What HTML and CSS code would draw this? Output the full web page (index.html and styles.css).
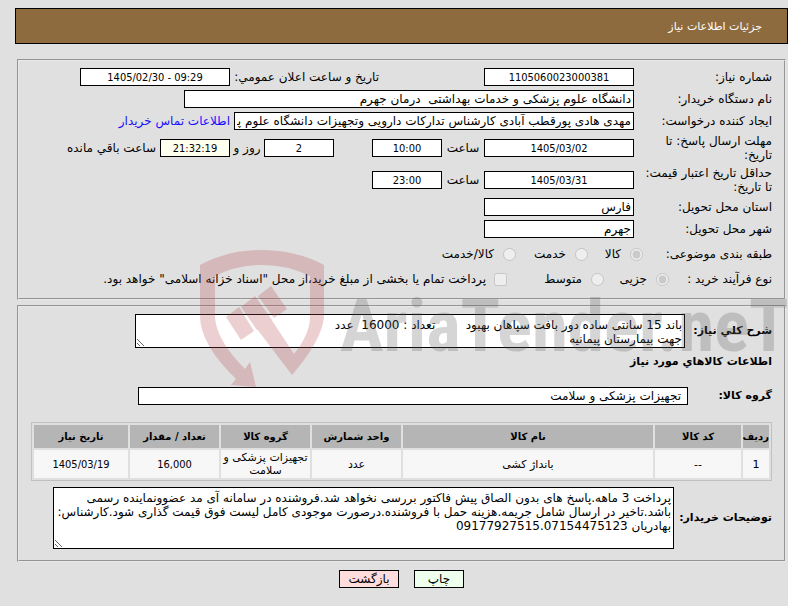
FILE: index.html
```
<!DOCTYPE html>
<html lang="fa" dir="rtl">
<head>
    <meta charset="UTF-8">
    <meta name="viewport" content="width=device-width, initial-scale=1.0">
    <title>جزئیات اطلاعات نیاز</title>
    <link rel="stylesheet" href="styles.css">
</head>
<body>
    <h1 class="header">جزئیات اطلاعات نیاز</h1>
    <form class="wrapper">
        <fieldset class="box">
            <div class="row">
                <label class="name" for="number">شماره نیاز:</label>
                <input class="field date" id="number" type="text" value="1105060023000381" readonly>
                <label class="announce" for="announce">تاریخ و ساعت اعلان عمومي:</label>
                <input class="field date" id="announce" type="text" dir="ltr" value="1405/02/30 - 09:29" readonly>
            </div>
            <div class="row">
                <label class="name" for="org">نام دستگاه خریدار:</label>
                <input class="field org" id="org" type="text" value="دانشگاه علوم پزشکی و خدمات بهداشتی  درمان جهرم" readonly>
            </div>
            <div class="row">
                <label class="name" for="creator">ایجاد کننده درخواست:</label>
                <input class="field creator" id="creator" type="text" value="مهدی هادی پورقطب آبادی کارشناس تدارکات دارویی وتجهیزات دانشگاه علوم پزشکی جهرم" readonly>
                <a class="contact" href="#">اطلاعات تماس خریدار</a>
            </div>
            <div class="row tall">
                <label class="name" for="deadline">مهلت ارسال پاسخ: تا<br>تاریخ:</label>
                <input class="field date" id="deadline" type="text" value="1405/03/02" readonly>
                <label class="unit" for="deadlineTime">ساعت</label>
                <input class="field time" id="deadlineTime" type="text" value="10:00" readonly>
                <input class="field time days" id="days" type="text" value="2" readonly>
                <label class="and" for="days">روز و</label>
                <input class="field time left" id="left" type="text" value="21:32:19" readonly>
                <label class="remain" for="left">ساعت باقي مانده</label>
            </div>
            <div class="row tall">
                <label class="name" for="valid">حداقل تاریخ اعتبار قیمت:<br>تا تاریخ:</label>
                <input class="field date" id="valid" type="text" value="1405/03/31" readonly>
                <label class="unit" for="validTime">ساعت</label>
                <input class="field time" id="validTime" type="text" value="23:00" readonly>
            </div>
            <div class="row">
                <label class="name" for="province">استان محل تحویل:</label>
                <input class="field place" id="province" type="text" value="فارس" readonly>
            </div>
            <div class="row">
                <label class="name" for="city">شهر محل تحویل:</label>
                <input class="field place" id="city" type="text" value="جهرم" readonly>
            </div>
            <div class="row options subject">
                <span class="name">طبقه بندی موضوعی:</span>
                <label class="option"><input type="radio" name="subject" checked disabled>کالا</label>
                <label class="option second"><input type="radio" name="subject" disabled>خدمت</label>
                <label class="option last"><input type="radio" name="subject" disabled>کالا/خدمت</label>
            </div>
            <div class="row options process">
                <span class="name">نوع فرآیند خرید :</span>
                <label class="option"><input type="radio" name="process" checked disabled>جزیی</label>
                <label class="option second"><input type="radio" name="process" disabled>متوسط</label>
                <label class="option last"><input type="checkbox" disabled>پرداخت تمام یا بخشی از مبلغ خرید،از محل "اسناد خزانه اسلامی" خواهد بود.</label>
            </div>
        </fieldset>

        <fieldset class="box goods">
            <div class="row desc">
                <label class="bold" for="desc">شرح كلي نیاز:</label>
                <textarea class="area" id="desc" readonly>باند 15 سانتی ساده دور بافت سپاهان بهبود        تعداد : 16000  عدد
جهت بیمارستان پیمانیه</textarea>
            </div>
            <h2 class="title">اطلاعات كالاهاي مورد نیاز</h2>
            <div class="row group">
                <label class="bold" for="group">گروه کالا:</label>
                <input class="field" id="group" type="text" value="تجهیزات پزشکی و سلامت" readonly>
            </div>
            <table class="items">
                <thead>
                    <tr>
                        <th class="num">ردیف</th>
                        <th class="code">کد کالا</th>
                        <th>نام کالا</th>
                        <th class="mid">واحد شمارش</th>
                        <th class="mid">گروه کالا</th>
                        <th class="mid">تعداد / مقدار</th>
                        <th class="when">تاریخ نیاز</th>
                    </tr>
                </thead>
                <tbody>
                    <tr>
                        <td>1</td>
                        <td>--</td>
                        <td>بانداژ کشی</td>
                        <td>عدد</td>
                        <td>تجهیزات پزشکی و سلامت</td>
                        <td class="digits">16,000</td>
                        <td class="digits">1405/03/19</td>
                    </tr>
                </tbody>
            </table>
            <div class="row notes">
                <label class="bold" for="notes">توضیحات خریدار:</label>
                <textarea class="area" id="notes" readonly>پرداخت 3 ماهه.پاسخ های بدون الصاق پیش فاکتور بررسی نخواهد شد.فروشنده در سامانه آی مد عضوونماینده رسمی
باشد.تاخیر در ارسال شامل جریمه.هزینه حمل با فروشنده.درصورت موجودی کامل لیست فوق قیمت گذاری شود.کارشناس:
بهادریان 09177927515.07154475123</textarea>
            </div>
        </fieldset>

        <div class="buttons">
            <button class="btn print" type="button">چاپ</button>
            <button class="btn back" type="button">بازگشت</button>
        </div>
    </form>

    <div class="watermark" dir="ltr" aria-hidden="true">
        <svg class="shield" width="126" height="138" viewBox="0 0 126 138">
            <path d="M0 15 Q28 0 62 0 T124 15 V67 Q122 90 92 125 L57 79 L71 69 L94 104 Q110 84 110 67 V26 Q88 15 62 15 T15 26 V68 Q17 91 45 119 L50 112 L56 137 L31 135 L36 129 Q0 94 0 66 Z"/>
            <path d="M71 36 L87 59 L74 68 L58 46 Z"/>
            <path d="M55 46 L72 70 L57 80 L41 57 Z"/>
            <path d="M39 57 L54 81 L41 90 L26 67 Z"/>
        </svg>
        <span class="brand">AriaTender.neT</span>
    </div>
</body>
</html>
```
FILE: styles.css
```
*{
    box-sizing: border-box;
}
body{
    margin: 8px 0 0 15px;
    background: #e0e0e0;
    color: black;
    font-family: "DejaVu Sans", sans-serif;
    font-size: 12px;
    line-height: 14px;
}
.header{
    height: 36px;
    margin: 0 0 15px;
    padding: 2px 25px 0;
    display: flex;
    align-items: center;
    border: 1px solid black;
    background: #8e6b3e;
    color: white;
    font-size: 11px;
    font-weight: normal;
}
.wrapper{
    margin: 0 2px;
}
.box{
    min-width: 0;
    margin: 0 0 5px;
    padding: 5px 12px 8px;
    border: 2px groove #e8e8e8;
}
.row{
    min-height: 22px;
    display: flex;
    align-items: center;
    white-space: nowrap;
}
.tall{
    min-height: 32px;
}
.name{
    width: 138px;
    flex: none;
}
.field, .area{
    border: 1px solid black;
    border-radius: 0;
    background: white;
    color: black;
    font: inherit;
    outline: none;
}
.field{
    height: 18px;
    padding: 0 2px;
}
.date, .time, .digits{
    font-family: "DejaVu Sans Condensed", "DejaVu Sans", sans-serif;
    font-size: 11px;
    text-align: center;
}
.date{
    width: 150px;
}
.place{
    width: 150px;
}
.org{
    width: 450px;
}
.creator{
    width: 400px;
}
.time{
    width: 70px;
}
.announce{
    width: 149px;
    margin-right: 105px;
}
.contact{
    margin-right: 4px;
    color: #1a0dff;
    text-decoration: none;
}
.unit{
    width: 42px;
    text-align: center;
}
.days{
    margin-right: 38px;
}
.and{
    width: 34px;
    text-align: center;
}
.left{
    background: #fffff0;
}
.remain{
    margin-right: 4px;
}
.subject{
    min-height: 28px;
}
.subject .name{
    width: 129px;
}
.process .name{
    width: 103px;
}
.option{
    width: 55px;
    display: flex;
    align-items: center;
    gap: 9px;
}
.option input{
    width: 13px;
    height: 13px;
    margin: 0;
    flex: none;
}
.subject .second{
    width: 72px;
}
.process .option{
    width: 65px;
}
.process .second{
    width: 97px;
}
.options .last{
    width: auto;
}
.process .last{
    gap: 8px;
}
.bold{
    font-size: 11px;
    font-weight: bold;
}
.area{
    margin: 0;
    padding: 3px 2px;
    overflow: hidden;
    resize: both;
}
.goods{
    padding-top: 7px;
    padding-bottom: 11px;
}
.desc .bold{
    width: 87px;
}
.desc .area{
    width: 550px;
    height: 34px;
}
.title{
    margin: 7px 0 16px;
    font-size: 11px;
}
.group .bold{
    width: 84px;
}
.group .field{
    width: 550px;
    padding: 0 6px;
}
.items{
    width: 100%;
    margin: 15px 0 6px;
    table-layout: fixed;
    border: 1px solid #c0c0c0;
    border-spacing: 2px;
    font-size: 11px;
    line-height: 13px;
    text-align: center;
}
.items th, .items td{
    padding: 0;
}
.items th{
    height: 23px;
    background: #b5b5b5;
    font-size: 10px;
}
.items td{
    height: 28px;
    background: #f7f7f7;
}
.num{
    width: 26px;
}
.code{
    width: 86px;
}
.mid{
    width: 89px;
}
.when{
    width: 94px;
}
.notes .bold{
    width: 98px;
}
.notes .area{
    width: 621px;
    height: 62px;
}
.buttons{
    margin-top: 8px;
    display: flex;
    justify-content: center;
    gap: 15px;
}
.btn{
    height: 18px;
    padding: 0;
    border: 1px solid black;
    color: black;
    font: inherit;
    cursor: pointer;
}
.print{
    width: 50px;
    background: #eeffee;
}
.back{
    width: 60px;
    background: #ffdddd;
}
.watermark{
    position: absolute;
    top: 250px;
    left: 200px;
    display: flex;
    align-items: flex-start;
    gap: 14px;
    opacity: 0.25;
    pointer-events: none;
}
.shield{
    fill: #b8444b;
}
.brand{
    margin-top: 36px;
    color: #5c5c5c;
    font-family: "Roboto Condensed", "Open Sans Condensed", Roboto, sans-serif;
    font-size: 73px;
    font-weight: bold;
    line-height: 80px;
}
```
